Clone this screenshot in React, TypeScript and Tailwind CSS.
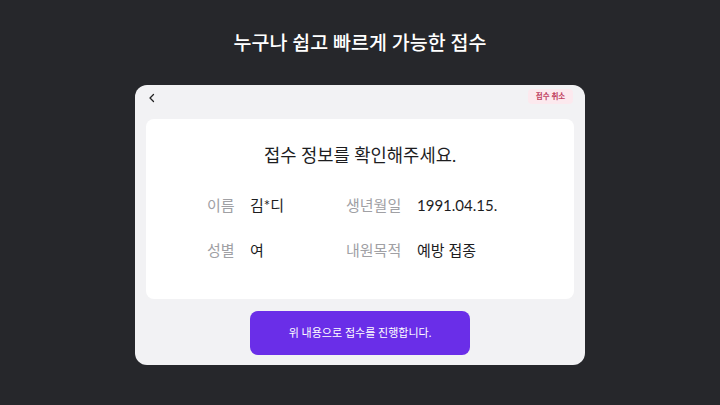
import React from "react";

const rows = [
    [["이름", "김*디"], ["생년월일", "1991.04.15."]],
    [["성별", "여"], ["내원목적", "예방 접종"]],
];

const App: React.FC = () => {
    return (
        <div
            className="w-[720px] h-[405px] bg-[#26272b] flex flex-col items-center overflow-hidden"
            style={{ fontFamily: 'Lato, "Noto Sans CJK KR", sans-serif' }}
        >
            <h1 className="mt-[30px] h-[26px] text-[19.5px] leading-[26px] font-medium text-white">누구나 쉽고 빠르게 가능한 접수</h1>

            <div className="mt-[29px] w-[450px] h-[280px] bg-[#f2f2f4] rounded-[12px] flex flex-col px-[11px] pb-[10px]">
                <div className="h-[34px] flex items-start justify-between">
                    <button className="mt-[6px] ml-[1px] w-[10px] h-[14px] flex items-center justify-center">
                        <svg width="8" height="10" viewBox="0 0 8 10" fill="none">
                            <path d="M5.5 1.5 L2 5 L5.5 8.5" stroke="#222" strokeWidth="1.3" strokeLinecap="round" strokeLinejoin="round" />
                        </svg>
                    </button>
                    <span className="mt-[4px] mr-[1px] w-[45px] h-[15px] leading-[15px] text-center rounded-[4px] bg-[#fce9ee] text-[7.5px] font-bold text-[#c0405f]">접수 취소</span>
                </div>

                <div className="h-[180px] bg-white rounded-[8px] flex flex-col">
                    <p className="mt-[26px] text-center text-[17.7px] leading-[22px] text-[#1d1d1f]">접수 정보를 확인해주세요.</p>
                    <div className="mt-[27px] pl-[61px] flex flex-col gap-[23px]">
                        {rows.map((row, i) => (
                            <div key={i} className="flex items-center h-[22px] text-[15px]">
                                <span className="w-[43px] text-[#a0a0a4]">{row[0][0]}</span>
                                <span className="w-[96px] text-[#1d1d1f]">{row[0][1]}</span>
                                <span className="w-[71px] text-[#a0a0a4]">{row[1][0]}</span>
                                <span className="text-[#1d1d1f]">{row[1][1]}</span>
                            </div>
                        ))}
                    </div>
                </div>

                <button className="mt-[12px] mx-auto w-[220px] h-[44px] rounded-[8px] bg-[#6a2ee8] text-white text-[11px]">
                    위 내용으로 접수를 진행합니다.
                </button>
            </div>
        </div>
    );
};

export default App;
